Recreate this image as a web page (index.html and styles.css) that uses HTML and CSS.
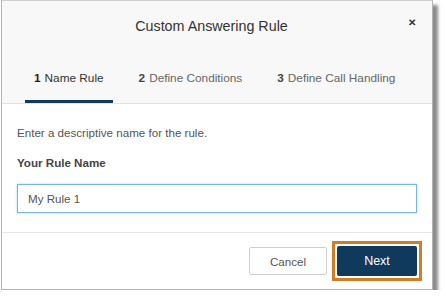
FILE: index.html
```html
<!DOCTYPE html>
<html>
<head>
<meta charset="utf-8">
<link rel="stylesheet" href="styles.css">
</head>
<body>
<div class="dialog">
  <div class="header">
    <div class="title">Custom Answering Rule</div>
    <span class="close">&#x2715;</span>
  </div>
  <div class="tabs">
    <div class="tab active"><b>1</b> Name Rule</div>
    <div class="tab"><b>2</b> Define Conditions</div>
    <div class="tab"><b>3</b> Define Call Handling</div>
  </div>
  <div class="content">
    <p class="hint">Enter a descriptive name for the rule.</p>
    <div class="label">Your Rule Name</div>
    <div class="input">My Rule 1</div>
  </div>
  <div class="footer">
    <button class="btn cancel">Cancel</button>
    <div class="highlight"><button class="btn next">Next</button></div>
  </div>
</div>
</body>
</html>
```
FILE: styles.css
```css
html, body {
  margin: 0;
  padding: 0;
  background: #ffffff;
  font-family: "Liberation Sans", Arial, sans-serif;
}
.dialog {
  position: relative;
  margin-left: 1px;
  width: 430px;
  height: 288px;
  border: 1px solid #b4b4b4;
  border-top-color: #cfcfcf;
  background: #ffffff;
  box-shadow: 5px 5px 3px rgba(0,0,0,0.45);
  display: flex;
  flex-direction: column;
}
.header {
  height: 50px;
  flex: none;
  background: #f8f8f8;
  display: flex;
  align-items: center;
  justify-content: center;
  padding-right: 11px;
  position: relative;
}
.title {
  font-size: 14.3px;
  color: #333;
}
.close {
  position: absolute;
  right: 16px;
  top: 16px;
  font-size: 10px;
  color: #333;
  font-weight: bold;
}
.tabs {
  height: 52px;
  flex: none;
  background: #f8f8f8;
  border-bottom: 1px solid #e2e2e2;
  display: flex;
  padding-left: 23px;
}
.tab {
  font-size: 11.8px;
  color: #666;
  white-space: nowrap;
  flex: none;
  display: flex;
  align-items: center;
  padding: 0 9px;
  margin-right: 17px;
  border-bottom: 3px solid transparent;
  padding-top: 4px;
}
.tab b { color: #444; margin-right: 4px; }
.tab.active { color: #333; border-bottom-color: #133a5b; }
.tab.active b { color: #222; }
.content {
  padding: 22px 15px 0 15px;
  flex: 1;
}
.hint {
  margin: 0;
  font-size: 11.6px;
  line-height: 14px;
  color: #555;
}
.label {
  margin-top: 16px;
  font-size: 11.6px;
  line-height: 14px;
  font-weight: bold;
  color: #444;
}
.input {
  margin-top: 14px;
  height: 27px;
  border: 1px solid #79b6de;
  box-shadow: 0 0 2px rgba(102,175,233,0.6);
  font-size: 11.6px;
  color: #555;
  padding-left: 10px;
  display: flex;
  align-items: center;
  width: 388px;
}
.footer {
  height: 56px;
  flex: none;
  border-top: 1px solid #e6e6e6;
  display: flex;
  align-items: center;
  justify-content: flex-end;
  padding-right: 10px;
  gap: 5px;
}
.btn {
  font-family: "Liberation Sans", Arial, sans-serif;
  font-size: 11.6px;
  border-radius: 2px;
  cursor: pointer;
}
.cancel {
  width: 78px;
  height: 28px;
  background: #fff;
  border: 1px solid #cfcfcf;
  color: #555;
}
.highlight {
  border: 3px solid #d07d28;
  padding: 2px;
}
.next {
  width: 80px;
  height: 30px;
  background: #0f3a5c;
  border: none;
  color: #fff;
  display: block;
  font-size: 12.5px;
}
```
